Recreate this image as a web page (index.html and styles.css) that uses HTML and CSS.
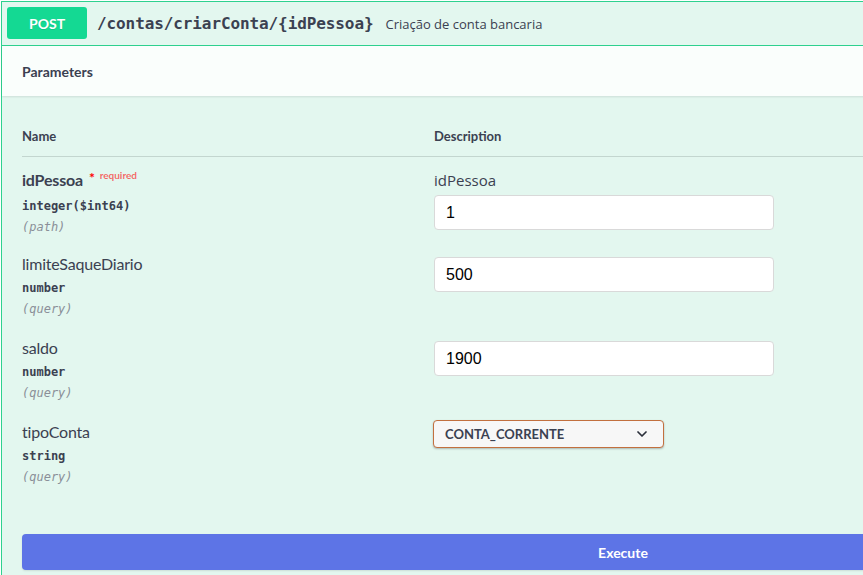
FILE: index.html
```html
<!DOCTYPE html>
<html lang="pt">
<head>
<meta charset="utf-8">
<title>POST /contas/criarConta/{idPessoa}</title>
<link rel="stylesheet" href="styles.css">
</head>
<body>
<div class="page">
  <div class="opblock">
    <div class="summary">
      <span class="method">POST</span>
      <span class="path">/contas/criarConta/{idPessoa}</span>
      <span class="summary-desc">Criação de conta bancaria</span>
    </div>
    <div class="section-header">
      <h4 class="section-title">Parameters</h4>
    </div>
    <div class="params">
      <div class="params-head">
        <div class="col-name">Name</div>
        <div class="col-desc">Description</div>
      </div>

      <div class="param-row">
        <div class="col-name">
          <div class="param-name required">idPessoa<span class="star">*</span><span class="req">required</span></div>
          <div class="param-type">integer<span class="fmt">($int64)</span></div>
          <div class="param-in">(path)</div>
        </div>
        <div class="col-desc">
          <div class="param-desc">idPessoa</div>
          <input class="field" type="text" value="1">
        </div>
      </div>

      <div class="param-row">
        <div class="col-name">
          <div class="param-name">limiteSaqueDiario</div>
          <div class="param-type">number</div>
          <div class="param-in">(query)</div>
        </div>
        <div class="col-desc">
          <input class="field" type="text" value="500">
        </div>
      </div>

      <div class="param-row">
        <div class="col-name">
          <div class="param-name">saldo</div>
          <div class="param-type">number</div>
          <div class="param-in">(query)</div>
        </div>
        <div class="col-desc">
          <input class="field" type="text" value="1900">
        </div>
      </div>

      <div class="param-row">
        <div class="col-name">
          <div class="param-name">tipoConta</div>
          <div class="param-type">string</div>
          <div class="param-in">(query)</div>
        </div>
        <div class="col-desc">
          <div class="select">
            <span class="select-value">CONTA_CORRENTE</span>
            <svg class="chevron" width="10" height="6" viewBox="0 0 10 6"><path d="M1 1 L5 5 L9 1" fill="none" stroke="#2b2f3a" stroke-width="1.7" stroke-linecap="round" stroke-linejoin="round"/></svg>
          </div>
        </div>
      </div>
    </div>
    <div class="execute-wrapper">
      <button class="execute" type="button">Execute</button>
    </div>
  </div>
</div>
</body>
</html>
```

FILE: styles.css
```css
html, body {
  margin: 0;
  padding: 0;
  overflow: hidden;
  background: #ffffff;
}

.page {
  padding: 1px 0 0 1px;
  width: 1300px;
}

.opblock {
  width: 1242px;
  border: 1px solid #2ed18f;
  border-right: none;
  background: #e3f7ef;
  color: #3b4151;
  font-family: Lato, "Noto Sans", sans-serif;
  min-height: 600px;
}

.summary {
  display: flex;
  align-items: flex-start;
  padding: 5px 5px 6px 5px;
  border-bottom: 1px solid #2ed18f;
  height: 32px;
}

.method {
  min-width: 80px;
  height: 32px;
  box-sizing: border-box;
  display: flex;
  align-items: center;
  justify-content: center;
  background: #14d993;
  color: #ffffff;
  font-weight: 700;
  font-size: 14px;
  border-radius: 3px;
  text-shadow: 0 1px 0 rgba(0,0,0,.1);
}

.path {
  align-self: center;
  padding: 1px 10px 0 10px;
  font-family: "DejaVu Sans Mono", "Liberation Mono", monospace;
  font-weight: 700;
  font-size: 16px;
  color: #3b4151;
  letter-spacing: -0.1px;
}

.summary-desc {
  align-self: center;
  padding: 1px 0 0 2px;
  font-family: "Open Sans", "Noto Sans", sans-serif;
  font-size: 13px;
  color: #3b4151;
}

.section-header {
  height: 50px;
  box-sizing: border-box;
  padding: 8px 20px;
  display: flex;
  align-items: center;
  background: rgba(255,255,255,.8);
  box-shadow: 0 1px 2px rgba(0,0,0,.1);
}

.section-title {
  margin: 0;
  font-size: 14px;
  font-weight: 700;
  color: #3b4151;
}

.params {
  padding: 20px 0 0 20px;
}

.params-head {
  display: flex;
  padding: 12px 0;
  line-height: 16px;
  font-size: 13px;
  font-weight: 700;
  border-bottom: 1px solid #c3d6cf;
}

.col-name {
  width: 412px;
  flex: none;
}

.col-desc {
  flex: 1;
}

.param-row {
  display: flex;
  height: 84px;
  padding-top: 15px;
  box-sizing: border-box;
}

.param-row .col-desc {
  padding-top: 1px;
}

.param-name {
  font-size: 16px;
  line-height: 16px;
  color: #3b4151;
  letter-spacing: -0.2px;
}

.param-name.required {
  font-weight: 700;
}

.star {
  color: #ff0000;
  font-size: 14px;
  position: relative;
  top: -3px;
  padding-left: 6px;
}

.req {
  color: rgba(255,0,0,.6);
  font-size: 10px;
  font-weight: 700;
  position: relative;
  top: -7px;
  padding-left: 5px;
  letter-spacing: 0;
}

.param-type {
  padding-top: 8px;
  font-family: "DejaVu Sans Mono", "Liberation Mono", monospace;
  font-size: 12px;
  line-height: 16px;
  font-weight: 700;
  color: #3b4151;
}

.param-in {
  padding-top: 5px;
  font-family: "DejaVu Sans Mono", "Liberation Mono", monospace;
  font-size: 12px;
  line-height: 16px;
  font-style: italic;
  color: #8a8f98;
}

.param-desc {
  margin: -4px 0 4px 0;
  font-family: "Open Sans", "Noto Sans", sans-serif;
  font-size: 15px;
  line-height: 22px;
  color: #3b4151;
}

.field {
  display: block;
  width: 340px;
  height: 35px;
  box-sizing: border-box;
  margin: 0;
  padding: 0 11px;
  border: 1px solid #d9d9d9;
  border-radius: 4px;
  background: #ffffff;
  font-family: "Liberation Sans", Arial, sans-serif;
  font-size: 16px;
  color: #000000;
  outline: none;
}

.select {
  width: 231px;
  height: 28px;
  box-sizing: border-box;
  margin-top: -5px;
  margin-left: -1px;
  display: flex;
  align-items: center;
  justify-content: space-between;
  padding: 0 16px 0 11px;
  background: #f7f7f7;
  border: 1px solid #c2703f;
  border-radius: 4px;
  box-shadow: 0 1px 2px rgba(0,0,0,.25);
}

.select-value {
  font-size: 13px;
  font-weight: 700;
  color: #3b4151;
}

.chevron {
  display: block;
}

.execute-wrapper {
  padding: 41px 20px 0 20px;
}

.execute {
  display: block;
  width: 100%;
  height: 36px;
  margin: 0;
  border: none;
  border-radius: 4px;
  background: #5d74e6;
  color: #ffffff;
  font-family: Lato, "Noto Sans", sans-serif;
  font-size: 14px;
  font-weight: 700;
  box-shadow: 0 1px 2px rgba(0,0,0,.1);
}
```
